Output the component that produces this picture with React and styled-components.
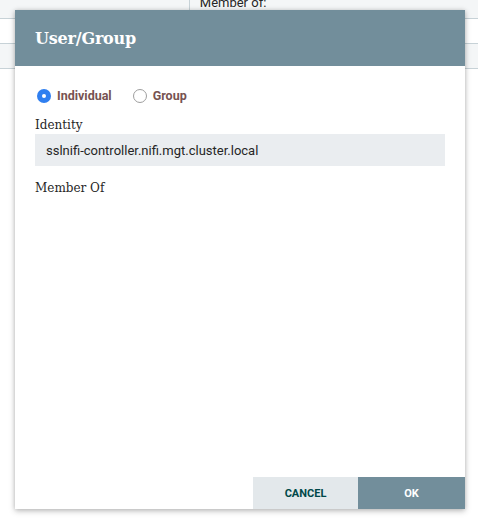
import React from 'react';
import styled, { createGlobalStyle } from 'styled-components';

const GlobalStyle = createGlobalStyle`
  html, body {
    margin: 0;
    padding: 0;
    background: #ffffff;
    font-family: Roboto, "Liberation Sans", sans-serif;
  }
`;

const Page = styled.div`
  position: relative;
  width: 478px;
  height: 518px;
  overflow: hidden;
  background: #ffffff;
`;

const BackTable = styled.div`
  display: flex;
  flex-direction: column;
`;

const BackRow = styled.div`
  height: ${p => p.h}px;
  background: ${p => p.bg};
  border-bottom: 1px solid #c7d2d7;
  display: flex;
`;

const BackCell = styled.div`
  width: ${p => p.w}px;
  border-right: ${p => (p.divider ? '1px solid #c7d2d7' : 'none')};
  font-size: 13px;
  color: #262626;
  padding-left: ${p => p.pad || 0}px;
  line-height: 1;
  margin-top: -4px;
`;

const Dialog = styled.div`
  position: absolute;
  left: 15px;
  top: 10px;
  width: 450px;
  height: 499px;
  background: #ffffff;
  display: flex;
  flex-direction: column;
  box-shadow: 0 2px 6px rgba(0, 0, 0, 0.25), 0 0 4px rgba(0, 0, 0, 0.12);
`;

const Header = styled.div`
  height: 56px;
  background: #728e9b;
  color: #ffffff;
  display: flex;
  align-items: center;
  padding-left: 20px;
  font-family: "DejaVu Serif", "Liberation Serif", serif;
  font-weight: bold;
  font-size: 16px;
  letter-spacing: -0.2px;
  padding-top: 1px;
  box-sizing: border-box;
`;

const Body = styled.div`
  flex: 1;
  padding: 22px 20px 0 20px;
  display: flex;
  flex-direction: column;
`;

const RadioRow = styled.div`
  display: flex;
  align-items: center;
  gap: 21px;
  height: 15px;
  padding-left: 2px;
`;

const RadioOption = styled.label`
  display: flex;
  align-items: center;
  gap: 6px;
  font-size: 12.5px;
  font-weight: bold;
  color: #775351;
`;

const RadioDot = styled.span`
  width: 14px;
  height: 14px;
  border-radius: 50%;
  box-sizing: border-box;
  background: ${p => (p.checked ? '#2f7ff0' : '#ffffff')};
  border: ${p => (p.checked ? 'none' : '1px solid #9e9e9e')};
  display: flex;
  align-items: center;
  justify-content: center;
  &::after {
    content: '';
    width: 4px;
    height: 4px;
    border-radius: 50%;
    background: ${p => (p.checked ? '#ffffff' : 'transparent')};
  }
`;

const FieldLabel = styled.div`
  font-family: "DejaVu Serif", "Liberation Serif", serif;
  font-size: 12px;
  color: #262626;
  margin-top: ${p => p.top}px;
`;

const ValueBox = styled.div`
  margin-top: 2px;
  height: 32px;
  background: #eaedf0;
  display: flex;
  align-items: center;
  padding-left: 11px;
  font-size: 13px;
  color: #262626;
`;

const Footer = styled.div`
  display: flex;
  justify-content: flex-end;
`;

const Button = styled.div`
  width: ${p => p.w}px;
  height: 32px;
  display: flex;
  align-items: center;
  justify-content: center;
  font-size: 11px;
  font-weight: bold;
  background: ${p => (p.primary ? '#728e9b' : '#e3e8eb')};
  color: ${p => (p.primary ? '#ffffff' : '#004849')};
`;

export default function App() {
  return (
    <Page>
      <GlobalStyle />
      <BackTable>
        <BackRow h={18} bg="#f4f6f7">
          <BackCell w={190} divider />
          <BackCell w={280} pad={10}>Member of:</BackCell>
        </BackRow>
        <BackRow h={24} bg="#ffffff" />
        <BackRow h={24} bg="#f4f6f7" />
      </BackTable>
      <Dialog>
        <Header>User/Group</Header>
        <Body>
          <RadioRow>
            <RadioOption>
              <RadioDot checked />
              Individual
            </RadioOption>
            <RadioOption>
              <RadioDot />
              Group
            </RadioOption>
          </RadioRow>
          <FieldLabel top={15}>Identity</FieldLabel>
          <ValueBox>sslnifi-controller.nifi.mgt.cluster.local</ValueBox>
          <FieldLabel top={15}>Member Of</FieldLabel>
        </Body>
        <Footer>
          <Button w={105}>CANCEL</Button>
          <Button w={107} primary>OK</Button>
        </Footer>
      </Dialog>
    </Page>
  );
}
